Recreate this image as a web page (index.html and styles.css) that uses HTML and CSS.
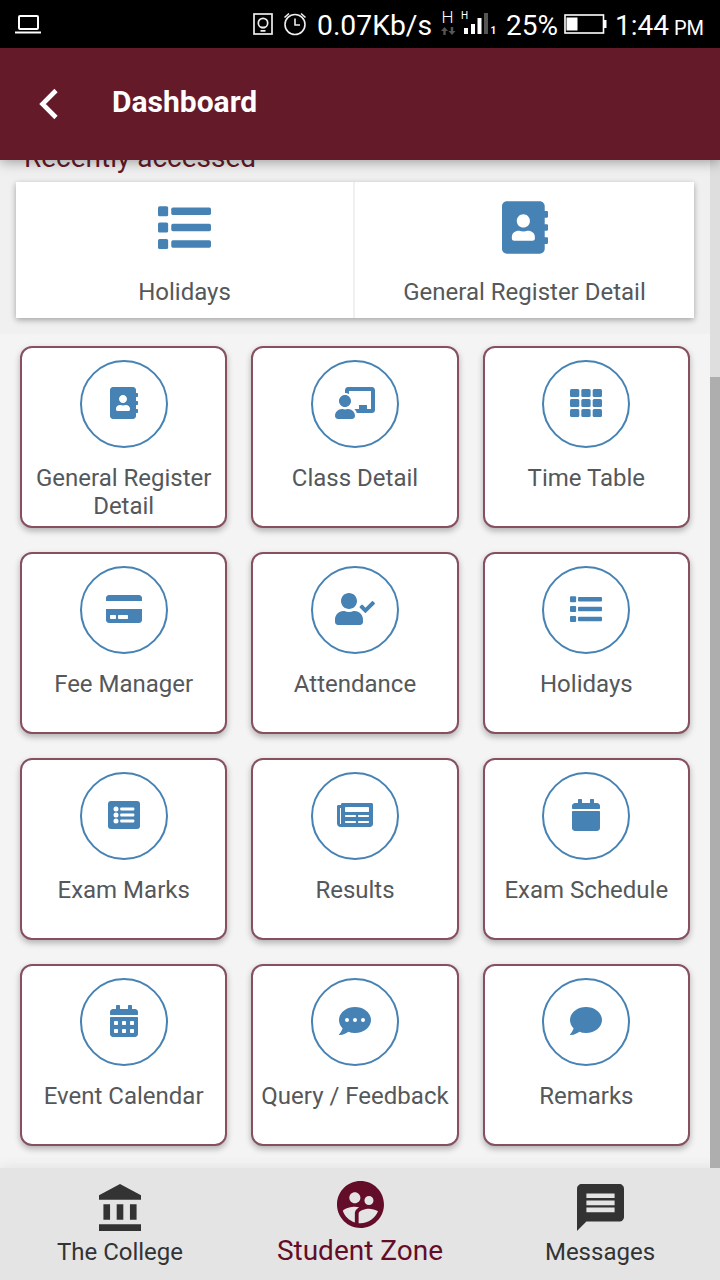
FILE: index.html
```html
<!DOCTYPE html>
<html lang="en">
<head>
<meta charset="utf-8">
<title>Dashboard</title>
<link rel="stylesheet" href="styles.css">
</head>
<body>
<svg class="sprite" aria-hidden="true">
  <symbol id="book" viewBox="0 0 448 512"><path d="M436 160c6.600 0 12-5.400 12-12v-40c0-6.600-5.400-12-12-12h-20V48c0-26.500-21.500-48-48-48H48C21.500 0 0 21.500 0 48v416c0 26.500 21.500 48 48 48h320c26.500 0 48-21.500 48-48v-48h20c6.600 0 12-5.400 12-12v-40c0-6.600-5.400-12-12-12h-20v-64h20c6.600 0 12-5.400 12-12v-40c0-6.600-5.400-12-12-12h-20v-64h20zm-228-32c35.300 0 64 28.700 64 64s-28.700 64-64 64-64-28.700-64-64 28.700-64 64-64zm112 236.800c0 10.600-10 19.200-22.400 19.200H118.400C106 384 96 375.400 96 364.800v-19.200c0-31.800 30.100-57.600 67.200-57.600h5c12.300 5.100 25.700 8 39.800 8s27.600-2.900 39.800-8h5c37.100 0 67.200 25.800 67.200 57.600v19.200z"/></symbol>
  <symbol id="teacher" viewBox="0 0 640 512"><path d="M208 352c-2.390 0-4.780.35-7.060 1.090C187.980 357.300 174.350 360 160 360c-14.370 0-28.020-2.700-40.950-6.910-2.280-.74-4.660-1.090-7.050-1.090C49.940 352-.33 402.480 0 464.620.14 490.880 21.730 512 48 512h224c26.270 0 47.860-21.120 48-47.380.33-62.140-49.940-112.620-112-112.620zm-48-32c53.020 0 96-42.980 96-96s-42.980-96-96-96-96 42.980-96 96 42.980 96 96 96zM592 0H208c-26.470 0-48 22.250-48 49.590V96c23.420 0 45.100 6.780 64 17.800V64h352v288h-64v-64H384v64h-76.240c19.100 16.690 33.120 38.730 39.690 64H592c26.470 0 48-22.250 48-49.590V49.590C640 22.250 618.470 0 592 0z"/></symbol>
  <symbol id="cells" viewBox="0 0 512 512">
    <rect y="32" width="149" height="128" rx="24"/><rect x="181" y="32" width="149" height="128" rx="24"/><rect x="363" y="32" width="149" height="128" rx="24"/>
    <rect y="192" width="149" height="128" rx="24"/><rect x="181" y="192" width="149" height="128" rx="24"/><rect x="363" y="192" width="149" height="128" rx="24"/>
    <rect y="352" width="149" height="128" rx="24"/><rect x="181" y="352" width="149" height="128" rx="24"/><rect x="363" y="352" width="149" height="128" rx="24"/>
  </symbol>
  <symbol id="card" viewBox="0 0 576 512"><path d="M0 432c0 26.500 21.500 48 48 48h480c26.500 0 48-21.500 48-48V256H0v176zm192-68c0-6.600 5.400-12 12-12h136c6.600 0 12 5.400 12 12v40c0 6.600-5.400 12-12 12H204c-6.600 0-12-5.400-12-12v-40zm-128 0c0-6.600 5.400-12 12-12h72c6.600 0 12 5.400 12 12v40c0 6.600-5.400 12-12 12H76c-6.600 0-12-5.400-12-12v-40zM576 80v48H0V80c0-26.500 21.500-48 48-48h480c26.500 0 48 21.500 48 48z"/></symbol>
  <symbol id="usercheck" viewBox="0 0 640 512"><path d="M224 256c70.700 0 128-57.300 128-128S294.700 0 224 0 96 57.300 96 128s57.300 128 128 128zm89.600 32h-16.700c-22.200 10.200-46.900 16-72.900 16s-50.600-5.800-72.900-16h-16.700C60.200 288 0 348.200 0 422.400V464c0 26.500 21.500 48 48 48h352c26.500 0 48-21.500 48-48v-41.600c0-74.200-60.200-134.400-134.400-134.400zm323-128.400l-27.800-28.100c-4.600-4.700-12.100-4.700-16.800-.1l-104.800 104-45.500-45.800c-4.600-4.700-12.100-4.700-16.800-.1l-28.100 27.900c-4.700 4.600-4.700 12.100-.1 16.800l81.700 82.300c4.600 4.700 12.100 4.700 16.800.1l141.300-140.200c4.600-4.700 4.700-12.200.1-16.800z"/></symbol>
  <symbol id="list" viewBox="0 0 512 512">
    <rect y="50" width="98" height="98" rx="16"/><rect y="207" width="98" height="98" rx="16"/><rect y="366" width="98" height="98" rx="16"/>
    <rect x="128" y="63" width="384" height="72" rx="16"/><rect x="128" y="220" width="384" height="72" rx="16"/><rect x="128" y="379" width="384" height="72" rx="16"/>
  </symbol>
  <symbol id="listalt" viewBox="0 0 512 512"><rect y="32" width="512" height="448" rx="48"/>
    <g fill="#fff"><circle cx="128" cy="160" r="40"/><circle cx="128" cy="256" r="40"/><circle cx="128" cy="352" r="40"/>
    <rect x="196" y="136" width="224" height="48" rx="12"/><rect x="196" y="232" width="224" height="48" rx="12"/><rect x="196" y="328" width="224" height="48" rx="12"/></g>
  </symbol>
  <symbol id="news" viewBox="0 0 576 512"><path d="M552 64H88c-13.255 0-24 10.745-24 24v8H24c-13.255 0-24 10.745-24 24v272c0 30.928 25.072 56 56 56h472c26.510 0 48-21.490 48-48V88c0-13.255-10.745-24-24-24z"/>
    <g fill="#fff"><path d="M56 400a8 8 0 0 1-8-8V144h16v248a8 8 0 0 1-8 8z"/><rect x="128" y="128" width="384" height="80" rx="12"/><rect x="128" y="256" width="176" height="32" rx="12"/><rect x="336" y="256" width="176" height="32" rx="12"/><rect x="128" y="352" width="176" height="32" rx="12"/><rect x="336" y="352" width="176" height="32" rx="12"/></g>
  </symbol>
  <symbol id="calendar" viewBox="0 0 448 512"><path d="M12 192h424c6.600 0 12 5.400 12 12v260c0 26.500-21.500 48-48 48H48c-26.500 0-48-21.500-48-48V204c0-6.600 5.400-12 12-12zm436-44v-36c0-26.500-21.500-48-48-48h-48V12c0-6.600-5.400-12-12-12h-40c-6.600 0-12 5.400-12 12v52H160V12c0-6.600-5.400-12-12-12h-40c-6.600 0-12 5.400-12 12v52H48C21.500 64 0 85.500 0 112v36c0 6.600 5.400 12 12 12h424c6.600 0 12-5.400 12-12z"/></symbol>
  <symbol id="events" viewBox="0 0 448 512"><use href="#calendar"/>
    <g fill="#fff"><rect x="64" y="256" width="64" height="64" rx="12"/><rect x="192" y="256" width="64" height="64" rx="12"/><rect x="320" y="256" width="64" height="64" rx="12"/><rect x="64" y="384" width="64" height="64" rx="12"/><rect x="192" y="384" width="64" height="64" rx="12"/><rect x="320" y="384" width="64" height="64" rx="12"/></g>
  </symbol>
  <symbol id="comment" viewBox="0 0 512 512"><path d="M256 32C114.600 32 0 125.100 0 240c0 49.600 21.400 95 57 130.700C44.500 421.100 2.700 466 2.200 466.500c-2.200 2.300-2.800 5.700-1.500 8.700S4.800 480 8 480c66.300 0 116-31.800 140.600-51.400 32.700 12.300 69 19.400 107.400 19.400 141.400 0 256-93.100 256-208S397.400 32 256 32z"/></symbol>
  <symbol id="dots" viewBox="0 0 512 512"><use href="#comment"/><g fill="#fff"><circle cx="128" cy="240" r="32"/><circle cx="256" cy="240" r="32"/><circle cx="384" cy="240" r="32"/></g></symbol>
</svg>

<div class="status">
  <svg class="laptop" width="26" height="22" viewBox="0 0 26 22" fill="none" stroke="#fff" stroke-width="2"><rect x="4" y="3" width="19" height="13" rx="1"/><path d="M0 19.500h26"/></svg>
  <svg class="bulb" width="20" height="24" viewBox="0 0 20 24" fill="none" stroke="#eee" stroke-width="1.700"><rect x="1" y="2" width="18" height="20"/><circle cx="10" cy="11" r="4.700"/><path d="M8 15.500h4M7.500 18.800h5"/></svg>
  <svg class="alarm" width="24" height="24" viewBox="0 0 24 24" fill="none" stroke="#eee" stroke-width="1.600"><circle cx="12" cy="12.500" r="10"/><path d="M12 6.500V13h5M1.500 5.500l4.500-4M22.500 5.500l-4.500-4"/></svg>
  <span class="speed">0.07Kb/s</span>
  <svg class="signal" width="56" height="36" viewBox="441 6 56 36">
    <text x="441.500" y="23" class="sig-h">H</text><text x="461" y="19" class="sig-s">H</text>
    <g fill="#555"><path d="M444.500 27l-3.500 4h2.300v4h2.400v-4h2.300zM452 35l-3.500-4h2.300v-4h2.400v4h2.300z"/><rect x="484" y="13" width="4" height="21"/></g>
    <g fill="#fff"><rect x="464" y="28" width="4" height="6"/><rect x="471" y="24" width="4" height="10"/><rect x="477.500" y="18" width="4" height="16"/></g>
    <text x="490.500" y="34" class="sig-n">1</text>
  </svg>
  <span class="percent">25%</span>
  <svg class="battery" width="43" height="20" viewBox="0 0 43 20"><rect x="1" y="1" width="38.500" height="18" fill="none" stroke="#fff" stroke-width="1.600"/><path fill="#fff" d="M2.500 3.500h11v13h-11zM40 6h2.500v8H40z"/></svg>
  <span class="clock">1:44</span><span class="ampm">PM</span>
</div>

<header class="toolbar">
  <svg width="20" height="32" viewBox="0 0 20 32" fill="none" stroke="#fff" stroke-width="4.600"><path d="M17 2.500L3.500 16 17 29.500"/></svg>
  <h1>Dashboard</h1>
</header>

<div class="viewport">
  <main class="content">
    <section class="recent">
      <h2>Recently accessed</h2>
      <div class="panel">
        <div class="shortcut"><svg width="53" height="53"><use href="#list"/></svg><span>Holidays</span></div>
        <div class="shortcut"><svg width="46" height="53"><use href="#book"/></svg><span>General Register Detail</span></div>
      </div>
    </section>
    <section class="tiles">
      <div class="tile"><i><svg width="28" height="32"><use href="#book"/></svg></i><span>General Register Detail</span></div>
      <div class="tile"><i><svg width="40" height="32"><use href="#teacher"/></svg></i><span>Class Detail</span></div>
      <div class="tile"><i><svg width="32" height="32"><use href="#cells"/></svg></i><span>Time Table</span></div>
      <div class="tile"><i><svg width="36" height="32"><use href="#card"/></svg></i><span>Fee Manager</span></div>
      <div class="tile"><i><svg width="40" height="32"><use href="#usercheck"/></svg></i><span>Attendance</span></div>
      <div class="tile"><i><svg width="32" height="32"><use href="#list"/></svg></i><span>Holidays</span></div>
      <div class="tile"><i><svg width="32" height="32"><use href="#listalt"/></svg></i><span>Exam Marks</span></div>
      <div class="tile"><i><svg width="36" height="32"><use href="#news"/></svg></i><span>Results</span></div>
      <div class="tile"><i><svg width="28" height="32"><use href="#calendar"/></svg></i><span>Exam Schedule</span></div>
      <div class="tile"><i><svg width="28" height="32"><use href="#events"/></svg></i><span>Event Calendar</span></div>
      <div class="tile"><i><svg width="32" height="32"><use href="#dots"/></svg></i><span>Query / Feedback</span></div>
      <div class="tile"><i><svg width="32" height="32"><use href="#comment"/></svg></i><span>Remarks</span></div>
    </section>
  </main>
  <div class="scrollbar"><div class="thumb"></div></div>
</div>

<nav class="tabs">
  <div class="tab"><svg width="42" height="47" viewBox="2 1 19 21" preserveAspectRatio="none"><path d="M4 10v7h3v-7H4zm6 0v7h3v-7h-3zM2 22h19v-3H2v3zm14-12v7h3v-7h-3zm-4.500-9L2 6v2h19V6l-9.500-5z"/></svg><span>The College</span></div>
  <div class="tab active"><svg width="47" height="47" viewBox="2 2 20 20"><path d="M11.990 2c-5.520 0-10 4.480-10 10s4.480 10 10 10 10-4.480 10-10-4.480-10-10-10zm3.610 6.340c1.070 0 1.930.86 1.930 1.930 0 1.070-.86 1.930-1.930 1.930-1.070 0-1.930-.86-1.930-1.930-.01-1.070.86-1.930 1.930-1.930zm-6-1.580c1.300 0 2.360 1.060 2.360 2.360 0 1.300-1.060 2.360-2.360 2.360s-2.360-1.060-2.360-2.360c0-1.310 1.050-2.360 2.360-2.360zm0 9.130v3.750c-2.400-.75-4.300-2.600-5.140-4.960 1.050-1.120 3.670-1.690 5.140-1.690.53 0 1.200.08 1.900.22-1.640.87-1.900 2.020-1.900 2.680zM11.990 20c-.27 0-.53-.01-.79-.04v-4.070c0-1.420 2.940-2.130 4.400-2.130 1.070 0 2.920.39 3.840 1.150-1.170 2.970-4.060 5.090-7.450 5.090z"/></svg><span>Student Zone</span></div>
  <div class="tab"><svg width="47" height="47" viewBox="2 2 20 20"><path d="M20 2H4c-1.100 0-1.990.9-1.990 2L2 22l4-4h14c1.100 0 2-.9 2-2V4c0-1.100-.9-2-2-2zm-2 12H6v-2h12v2zm0-3H6V9h12v2zm0-3H6V6h12v2z"/></svg><span>Messages</span></div>
</nav>
</body>
</html>
```
FILE: styles.css
```css
* { box-sizing: border-box; }
body {
  margin: 0;
  width: 720px;
  height: 1280px;
  overflow: hidden;
  display: flex;
  flex-direction: column;
  font-family: Roboto, "Liberation Sans", sans-serif;
  font-size: 24px;
  line-height: 28px;
  color: #55585a;
  background: #f4f4f4;
}
svg { display: block; flex: none; }
.sprite { display: none; }

.status {
  height: 48px;
  flex: none;
  display: flex;
  align-items: center;
  padding-left: 15px;
  background: #000;
  color: #fff;
  font-size: 28px;
  white-space: nowrap;
}
.status span { margin-top: 3px; }
.laptop { margin-right: 212px; }
.bulb { margin-right: 10px; }
.alarm { margin-right: 10px; }
.status .speed { width: 124px; font-size: 28.300px; }
.signal { margin-right: 9px; }
.percent { width: 58px; }
.battery { margin-right: 8px; }
.clock { width: 59px; }
.status .ampm { font-size: 20px; margin-top: 8px; }
.sig-h, .sig-s, .sig-n { fill: #fff; font-size: 17px; font-weight: 300; }
.sig-s { font-size: 10px; font-weight: 400; }
.sig-n { font-size: 10px; font-weight: 700; }

.toolbar {
  height: 112px;
  flex: none;
  display: flex;
  align-items: center;
  gap: 53px;
  padding-left: 39px;
  background: #651a29;
  color: #fff;
  box-shadow: 0 2px 12px rgba(0, 0, 0, .35);
  z-index: 3;
}
.toolbar h1 { margin: 0 0 4px; font-size: 30px; line-height: 36px; font-weight: 700; }

.viewport { height: 1008px; flex: none; display: flex; }
.content { width: 710px; }
.scrollbar { width: 10px; padding-top: 217px; background: #dedede; z-index: 2; }
.thumb { height: 791px; background: #aeaeae; }

.recent { display: flow-root; height: 174px; padding: 0 16px; background: #f0f0f0; }
.recent h2 {
  margin: -18px 0 8px 8px;
  font-size: 28px;
  line-height: 32px;
  font-weight: 400;
  color: #651a29;
}
.panel {
  width: 678px;
  height: 136px;
  display: flex;
  background: #fff;
  box-shadow: 0 2px 6px rgba(0, 0, 0, .33);
}
.shortcut {
  width: 339px;
  display: flex;
  flex-direction: column;
  align-items: center;
  gap: 24px;
  padding-top: 19px;
}
.shortcut:first-child { border-right: 2px solid #f0f0f0; }

.tiles {
  display: grid;
  grid-template-columns: repeat(3, 1fr);
  grid-auto-rows: 182px;
  gap: 24px;
  padding: 12px 20px;
}
.tile {
  display: flex;
  flex-direction: column;
  align-items: center;
  gap: 16px;
  padding-top: 12px;
  text-align: center;
  background: #fff;
  border: 2px solid #86505f;
  border-radius: 12px;
  box-shadow: 0 3px 6px rgba(0, 0, 0, .28);
}
.tile i {
  width: 88px;
  height: 88px;
  flex: none;
  display: flex;
  align-items: center;
  justify-content: center;
  padding-bottom: 2px;
  border: 2px solid #4682b4;
  border-radius: 50%;
}
.tile svg, .shortcut svg { fill: #4682b4; }

.tabs {
  height: 112px;
  flex: none;
  display: flex;
  background: #e4e4e4;
  color: #333;
  fill: #333;
  box-shadow: 0 -2px 10px #e4e4e4;
  z-index: 1;
}
.tab {
  width: 240px;
  display: flex;
  flex-direction: column;
  align-items: center;
  gap: 7px;
  padding-top: 16px;
}
.tab.active { padding-top: 13px; gap: 9px; font-size: 28px; color: #640d29; fill: #640d29; }
```
